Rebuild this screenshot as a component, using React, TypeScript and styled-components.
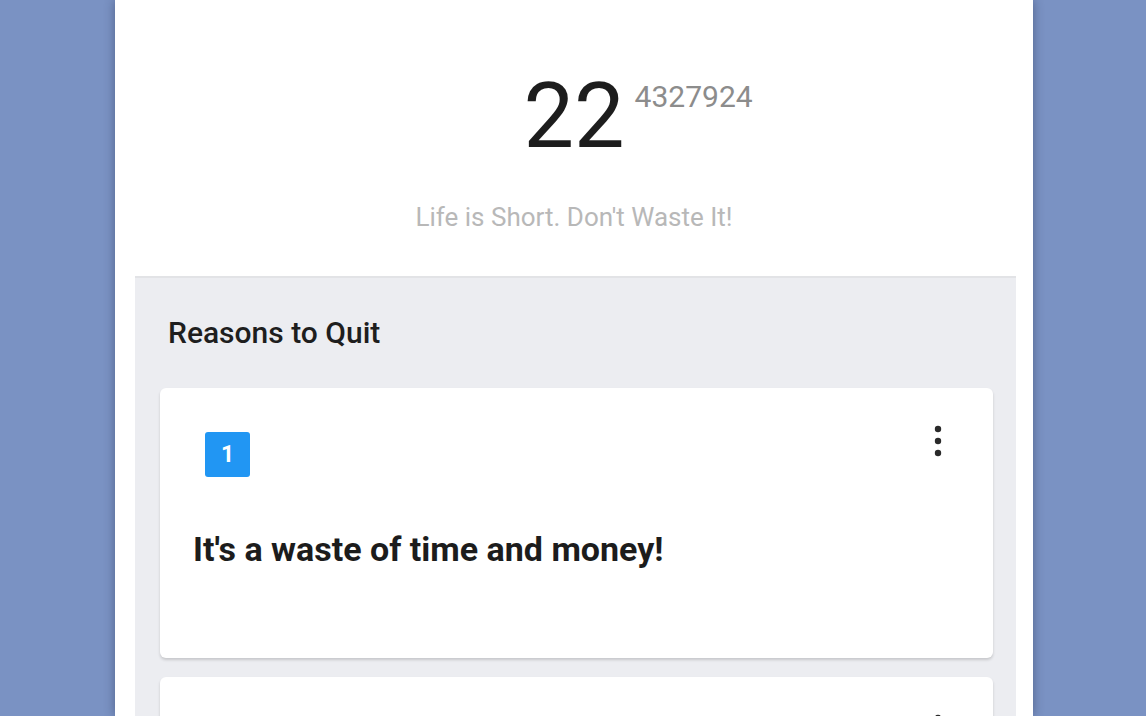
import React, { FunctionComponent } from "react";
import styled, { createGlobalStyle } from "styled-components";

const GlobalStyle = createGlobalStyle`
  html, body {
    margin: 0;
    padding: 0;
    background: #7a92c3;
    overflow: hidden;
  }
  * {
    box-sizing: border-box;
  }
`;

const Page = styled.div`
  display: flex;
  height: 716px;
  padding-left: 115px;
  font-family: Roboto, "Liberation Sans", sans-serif;
`;

const Phone = styled.div`
  width: 918px;
  height: 716px;
  background: #ffffff;
  box-shadow: 0 0 10px rgba(30, 40, 70, 0.45);
  display: flex;
  flex-direction: column;
  overflow: hidden;
`;

const Header = styled.div`
  flex-shrink: 0;
  height: 276px;
  display: flex;
  flex-direction: column;
  align-items: center;
  padding-top: 72px;
`;

const Counter = styled.div`
  position: relative;
  font-size: 90px;
  line-height: 90px;
  font-weight: 400;
  color: #1d1d1d;
`;

const Fraction = styled.span`
  position: absolute;
  left: 100%;
  top: 10px;
  margin-left: 10px;
  font-size: 30px;
  line-height: 30px;
  color: #8c8c8c;
`;

const Motto = styled.div`
  margin-top: 40px;
  font-size: 26px;
  line-height: 30px;
  color: #b8b8b8;
`;

const Reasons = styled.div`
  flex: 1;
  margin: 0 17px 0 20px;
  background: #ecedf1;
  border-top: 2px solid #e2e3e6;
  padding: 38px 23px 0 25px;
`;

const SectionTitle = styled.div`
  font-size: 30px;
  line-height: 34px;
  font-weight: 500;
  color: #1e1e1e;
  padding-left: 8px;
  margin-bottom: 38px;
`;

const Card = styled.div`
  background: #ffffff;
  border-radius: 6px;
  box-shadow: 0 2px 3px rgba(0, 0, 0, 0.16);
  height: 270px;
  margin-bottom: 19px;
  padding: 44px 46px 0 33px;
`;

const CardTop = styled.div`
  display: flex;
  justify-content: space-between;
  align-items: flex-start;
`;

const Badge = styled.div`
  width: 45px;
  height: 45px;
  margin-left: 12px;
  border-radius: 3px;
  background: #2196f3;
  color: #ffffff;
  font-size: 23px;
  font-weight: 700;
  display: flex;
  align-items: center;
  justify-content: center;
`;

const More = styled.svg`
  margin-top: -8px;
  width: 18px;
  height: 34px;
`;

const Reason = styled.div`
  margin-top: 52px;
  font-size: 34px;
  line-height: 40px;
  font-weight: 700;
  color: #1c1c1c;
`;

const MoreIcon = () => (
  <More viewBox="0 0 18 34">
    <circle cx="9" cy="5" r="3.2" fill="#2a2a2a" />
    <circle cx="9" cy="17" r="3.2" fill="#2a2a2a" />
    <circle cx="9" cy="29" r="3.2" fill="#2a2a2a" />
  </More>
);

const reasons = [
  { id: 1, text: "It's a waste of time and money!" },
  { id: 2, text: "" },
];

const App: FunctionComponent = () => {
  return (
    <>
      <GlobalStyle />
      <Page>
        <Phone>
          <Header>
            <Counter>
              22
              <Fraction>4327924</Fraction>
            </Counter>
            <Motto>Life is Short. Don't Waste It!</Motto>
          </Header>
          <Reasons>
            <SectionTitle>Reasons to Quit</SectionTitle>
            {reasons.map((r) => (
              <Card key={r.id}>
                <CardTop>
                  <Badge>{r.id}</Badge>
                  <MoreIcon />
                </CardTop>
                {r.text && <Reason>{r.text}</Reason>}
              </Card>
            ))}
          </Reasons>
        </Phone>
      </Page>
    </>
  );
};

export default App;
